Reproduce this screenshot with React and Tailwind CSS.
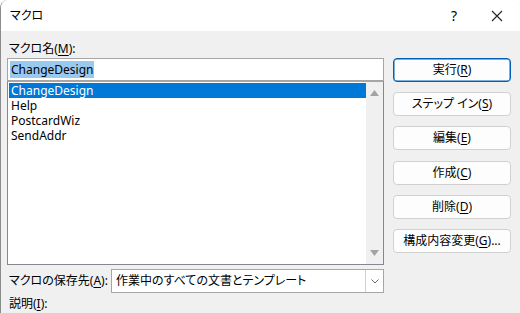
import React from 'react';

const font = { fontFamily: '"Noto Sans", "Noto Sans CJK JP", sans-serif' };

const BUTTONS = [
    { label: '実行', key: 'R', primary: true },
    { label: 'ステップ イン', key: 'S' },
    { label: '編集', key: 'E' },
    { label: '作成', key: 'C' },
    { label: '削除', key: 'D' },
    { label: '構成内容変更', key: 'G', tail: '...' },
];

const MACROS = ['ChangeDesign', 'Help', 'PostcardWiz', 'SendAddr'];

function Key({ children }) {
    return <span className="underline underline-offset-2">{children}</span>;
}

function DialogButton({ label, keyChar, tail, primary }) {
    return (
        <button
            className={
                'h-[24px] w-[118px] rounded-[4px] bg-[#fdfdfd] text-[12px] text-black leading-none flex items-center justify-center whitespace-nowrap ' +
                (primary ? 'border border-[#005fb8] shadow-[inset_0_0_0_0.5px_#005fb8]' : 'border border-[#d0d0d0]')
            }
        >
            {label}(<Key>{keyChar}</Key>){tail}
        </button>
    );
}

export default function App() {
    return (
        <div className="w-[520px] h-[313px] overflow-hidden bg-white text-black [font-feature-settings:'palt']" style={font}>
            <div className="w-full h-full rounded-t-[8px] border-l border-[#8c8c8c] bg-[#f0f0f0] overflow-hidden flex flex-col">
                {/* title bar */}
                <div className="h-[31px] bg-white flex items-center shrink-0">
                    <span className="pl-[9px] text-[12px]">マクロ</span>
                    <div className="ml-auto flex items-center">
                        <span className="w-[20px] text-center text-[14px] mr-[27px]">?</span>
                        <svg width="12" height="12" viewBox="0 0 12 12" className="mr-[17px]">
                            <path d="M1 1 L11 11 M11 1 L1 11" stroke="#222" strokeWidth="1.1" />
                        </svg>
                    </div>
                </div>

                {/* body */}
                <div className="flex pl-[6px] pt-[8px]">
                    <div className="w-[377px] flex flex-col">
                        <div className="h-[19px] text-[12px] leading-[19px] pl-[2px]">
                            マクロ名(<Key>M</Key>):
                        </div>
                        <div className="h-[23px] border border-[#a6a6a6] bg-white flex items-center px-[2px]">
                            <span className="bg-[#99c9ef] text-[12px] leading-[17px] px-[1px]">ChangeDesign</span>
                        </div>
                        <div className="h-[184px] border border-[#828790] border-t-[#a6a6a6] bg-white flex">
                            <div className="flex-1 pt-[1px] pl-[1px]">
                                {MACROS.map((m, i) => (
                                    <div
                                        key={m}
                                        className={
                                            'h-[15px] text-[12px] leading-[15px] pl-[2px] ' +
                                            (i === 0 ? 'bg-[#0078d7] text-white' : '')
                                        }
                                    >
                                        {m}
                                    </div>
                                ))}
                            </div>
                            <div className="w-[17px] bg-[#f0f0f0] flex flex-col items-center justify-between py-[8px]">
                                <svg width="9" height="6" viewBox="0 0 9 6">
                                    <path d="M4.5 0 L9 6 L0 6 Z" fill="#a3a3a3" />
                                </svg>
                                <svg width="9" height="6" viewBox="0 0 9 6">
                                    <path d="M0 0 L9 0 L4.5 6 Z" fill="#a3a3a3" />
                                </svg>
                            </div>
                        </div>
                        <div className="flex items-center mt-[4px] h-[24px]">
                            <span className="w-[104px] shrink-0 whitespace-nowrap text-[12px] pl-[2px]">
                                マクロの保存先(<Key>A</Key>):
                            </span>
                            <div className="flex-1 h-[24px] border border-[#a6a6a6] bg-white flex items-center">
                                <span className="flex-1 pl-[4px] text-[12px] whitespace-nowrap">作業中のすべての文書とテンプレート</span>
                                <div className="w-[18px] h-full border-l border-[#d0d0d0] flex items-center justify-center">
                                    <svg width="8" height="5" viewBox="0 0 8 5">
                                        <path d="M0.5 0.5 L4 4 L7.5 0.5" stroke="#555" strokeWidth="0.9" fill="none" />
                                    </svg>
                                </div>
                            </div>
                        </div>
                        <div className="h-[22px] text-[12px] leading-[22px] pl-[2px] whitespace-nowrap">
                            説明(<Key>I</Key>):
                        </div>
                    </div>

                    <div className="ml-[9px] pt-[19px] flex flex-col gap-[10.2px]">
                        {BUTTONS.map((b) => (
                            <DialogButton key={b.label} label={b.label} keyChar={b.key} tail={b.tail} primary={b.primary} />
                        ))}
                    </div>
                </div>
            </div>
        </div>
    );
}
